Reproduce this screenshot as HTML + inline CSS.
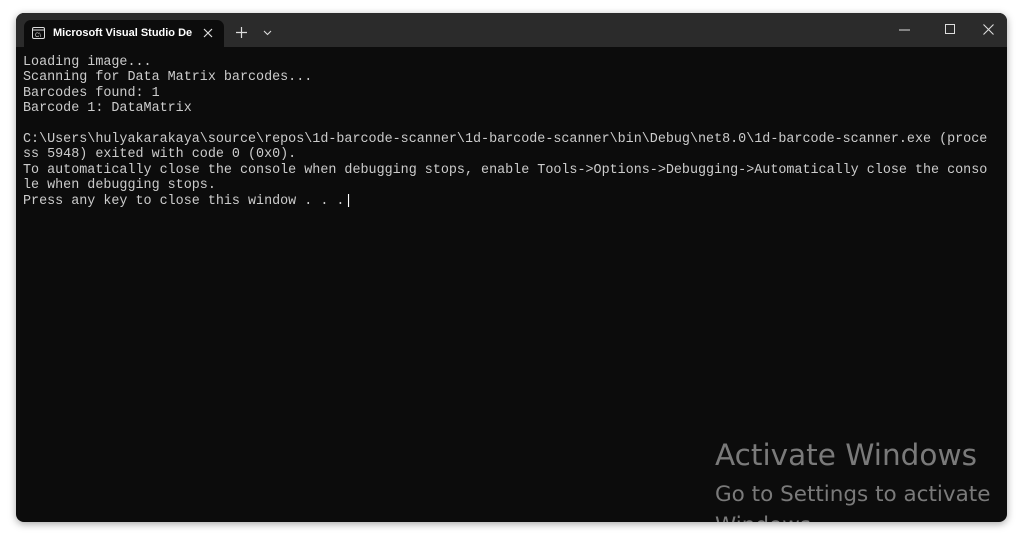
<!DOCTYPE html>
<html><head><meta charset="utf-8"><style>
html,body{margin:0;padding:0;width:1024px;height:541px;background:#fff;overflow:hidden}
.win{position:absolute;left:16px;top:13px;width:991px;height:509px;background:#0c0c0c;border-radius:8px;overflow:hidden;box-shadow:0 2px 8px rgba(0,0,0,.35)}
.tb{position:absolute;left:0;top:0;width:100%;height:34px;background:#2b2b2b}
.tab{position:absolute;left:8px;top:7px;width:200px;height:27px;background:#0c0c0c;border-radius:7px 7px 0 0}
.tt{position:absolute;left:29px;top:7px;font:bold 11px "Liberation Sans",sans-serif;color:#fff;white-space:nowrap;width:139px;overflow:hidden}
pre{position:absolute;left:7px;top:42px;margin:0;font:13.4px/15.4px "Liberation Mono",monospace;color:#ccc}
.act{position:absolute;left:699px;color:#7a7a7a;font-family:"DejaVu Sans","Liberation Sans",sans-serif;white-space:nowrap}
</style></head><body>
<div class="win">
<div class="tb">
<div class="tab">
<svg style="position:absolute;left:8px;top:7px" width="13" height="12" viewBox="0 0 13 12"><rect x="0.5" y="0.5" width="12" height="11" rx="1.5" fill="none" stroke="#ddd"/><line x1="0.5" y1="3" x2="12.5" y2="3" stroke="#ddd"/><text x="3" y="10" font-size="6" fill="#ddd" font-family="Liberation Sans">C\</text></svg>
<div class="tt">Microsoft Visual Studio Debug</div>
<svg style="position:absolute;left:179px;top:8px" width="10" height="10"><path d="M1 1L9 9M9 1L1 9" stroke="#ddd" stroke-width="1.2"/></svg>
</div>
<svg style="position:absolute;left:220px;top:14px" width="11" height="11"><path d="M5.5 0V11M0 5.5H11" stroke="#ddd" stroke-width="1.2"/></svg>
<svg style="position:absolute;left:247px;top:17px" width="9" height="6"><path d="M1 1L4.5 4.5L8 1" stroke="#ddd" fill="none" stroke-width="1.1"/></svg>
<svg style="position:absolute;left:883px;top:16px" width="11" height="2"><path d="M0 1H11" stroke="#ddd"/></svg>
<svg style="position:absolute;left:929px;top:11px" width="11" height="11"><rect x="0.5" y="0.5" width="9" height="9" fill="none" stroke="#ddd"/></svg>
<svg style="position:absolute;left:967px;top:11px" width="11" height="11"><path d="M0.5 0.5L10.5 10.5M10.5 0.5L0.5 10.5" stroke="#ddd" stroke-width="1.1"/></svg>
</div>
<pre>Loading image...
Scanning for Data Matrix barcodes...
Barcodes found: 1
Barcode 1: DataMatrix

C:\Users\hulyakarakaya\source\repos\1d-barcode-scanner\1d-barcode-scanner\bin\Debug\net8.0\1d-barcode-scanner.exe (proce
ss 5948) exited with code 0 (0x0).
To automatically close the console when debugging stops, enable Tools-&gt;Options-&gt;Debugging-&gt;Automatically close the conso
le when debugging stops.
Press any key to close this window . . .<span style="color:#fff">|</span></pre>
<div class="act" style="top:425px;font-size:29.5px">Activate Windows</div>
<div class="act" style="top:469px;font-size:21.5px">Go to Settings to activate</div>
<div class="act" style="top:500px;font-size:21.5px">Windows.</div>
</div>
</body></html>
